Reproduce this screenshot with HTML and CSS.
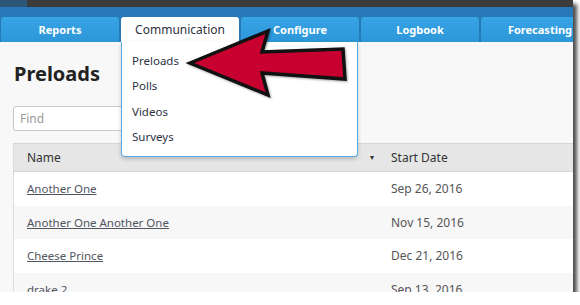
FILE: index.html
```html
<!DOCTYPE html>
<html>
<head>
<meta name="viewport" content="width=device-width, initial-scale=1">
<link rel="stylesheet" href="styles.css">
</head>
<body>

<div class="frame">
  <div class="topbar"><span class="logo"></span></div>

  <div class="nav">
    <div class="tab">Reports</div>
    <div class="tab active">Communication
      <ul class="menu">
        <li>Preloads</li>
        <li>Polls</li>
        <li>Videos</li>
        <li>Surveys</li>
      </ul>
    </div>
    <div class="tab">Configure</div>
    <div class="tab">Logbook</div>
    <div class="tab">Forecasting</div>
  </div>

  <div class="content">
    <h1>Preloads</h1>
    <input class="find" type="text" placeholder="Find">

    <table class="grid">
      <thead>
        <tr>
          <th class="col-name">Name <span class="sort">&#9662;</span></th>
          <th>Start Date</th>
        </tr>
      </thead>
      <tbody>
        <tr><td><a href="#">Another One</a></td><td>Sep 26, 2016</td></tr>
        <tr><td><a href="#">Another One Another One</a></td><td>Nov 15, 2016</td></tr>
        <tr><td><a href="#">Cheese Prince</a></td><td>Dec 21, 2016</td></tr>
        <tr><td><a href="#">drake 2</a></td><td>Sep 13, 2016</td></tr>
      </tbody>
    </table>
  </div>

  <!-- callout arrow drawn over the page -->
  <svg class="arrow" width="200" height="90" viewBox="180 20 200 90">
    <polygon points="190,63 268,31 262,52 343,49 345,79 262,73 268,95"
             fill="#c8002f" stroke="#111" stroke-width="3.5" stroke-linejoin="miter"/>
  </svg>
</div>

</body>
</html>
```

FILE: styles.css
```css
body {
  margin: 0;
  background-color: #ffffff;
  font-family: "Noto Sans", "Open Sans", sans-serif;
}

.frame {
  position: relative;
  width: 573px;
  height: 292px;
  overflow: hidden;
  background-color: #f8f8f8;
  box-shadow: 4px 4px 4px rgba(0, 0, 0, 0.7);
}

.topbar {
  height: 7px;
  background-color: #3b3b3b;
}

.logo {
  display: block;
  width: 27px;
  height: 7px;
  background-color: #2c5675;
}

.nav {
  display: flex;
  gap: 2px;
  padding: 10px 0 0 1px;
  background-color: #2878b8;
}

.tab {
  position: relative;
  flex: 0 0 118px;
  height: 25px;
  line-height: 25px;
  text-align: center;
  color: white;
  font-size: 11px;
  font-weight: bold;
  background: linear-gradient(#37a4e6, #2c96d8);
  border-radius: 3px 3px 0 0;
}

.tab.active {
  background: white;
  color: #2e3340;
  font-size: 12px;
  font-weight: normal;
}

.menu {
  position: absolute;
  top: 25px;
  left: 0;
  width: 235px;
  margin: 0;
  padding: 7px 0 6px;
  list-style: none;
  text-align: left;
  background-color: white;
  border: 1px solid #58aee4;
  border-top: none;
  border-radius: 0 0 4px 4px;
  box-shadow: 0 2px 4px rgba(0, 0, 0, 0.2);
  z-index: 2;
}

.menu li {
  height: 25.3px;
  line-height: 23px;
  padding-left: 10px;
  font-size: 11.5px;
  color: #2e3346;
}

.content {
  padding: 16px 0 0 13px;
}

h1 {
  margin: 0 0 0 1px;
  font-size: 20px;
  line-height: 32px;
  color: #222;
}

.find {
  display: block;
  width: 200px;
  height: 25px;
  margin-top: 16px;
  padding: 0 6px;
  box-sizing: border-box;
  border: 1px solid #c9c9c9;
  border-radius: 3px;
  font-family: inherit;
  font-size: 12px;
  background: white;
}

.find::placeholder {
  color: #999;
}

.grid {
  width: 600px;
  margin-top: 12px;
  border-collapse: collapse;
  border-left: 1px solid #dcdcdc;
  font-size: 12px;
}

.grid th {
  height: 27px;
  padding: 0 13px;
  text-align: left;
  font-weight: normal;
  color: #333;
  background-color: #e6e6e6;
  border-top: 1px solid #d6d6d6;
  border-bottom: 1px solid #d6d6d6;
}

.col-name {
  width: 338px;
  position: relative;
}

.sort {
  position: absolute;
  right: 4px;
  top: 7px;
  font-size: 8px;
  color: #333;
}

.grid td {
  height: 33.5px;
  padding: 0 13px;
  color: #555;
}

.grid td a {
  font-size: 11.5px;
}

.grid tbody tr:nth-child(even) td {
  background-color: #f7f7f7;
}

.grid tbody tr:nth-child(odd) td {
  background-color: white;
}

.grid a {
  color: #505560;
}

.arrow {
  position: absolute;
  left: 180px;
  top: 20px;
  z-index: 3;
  filter: drop-shadow(1px 1px 1px rgba(0, 0, 0, 0.35));
}
```
